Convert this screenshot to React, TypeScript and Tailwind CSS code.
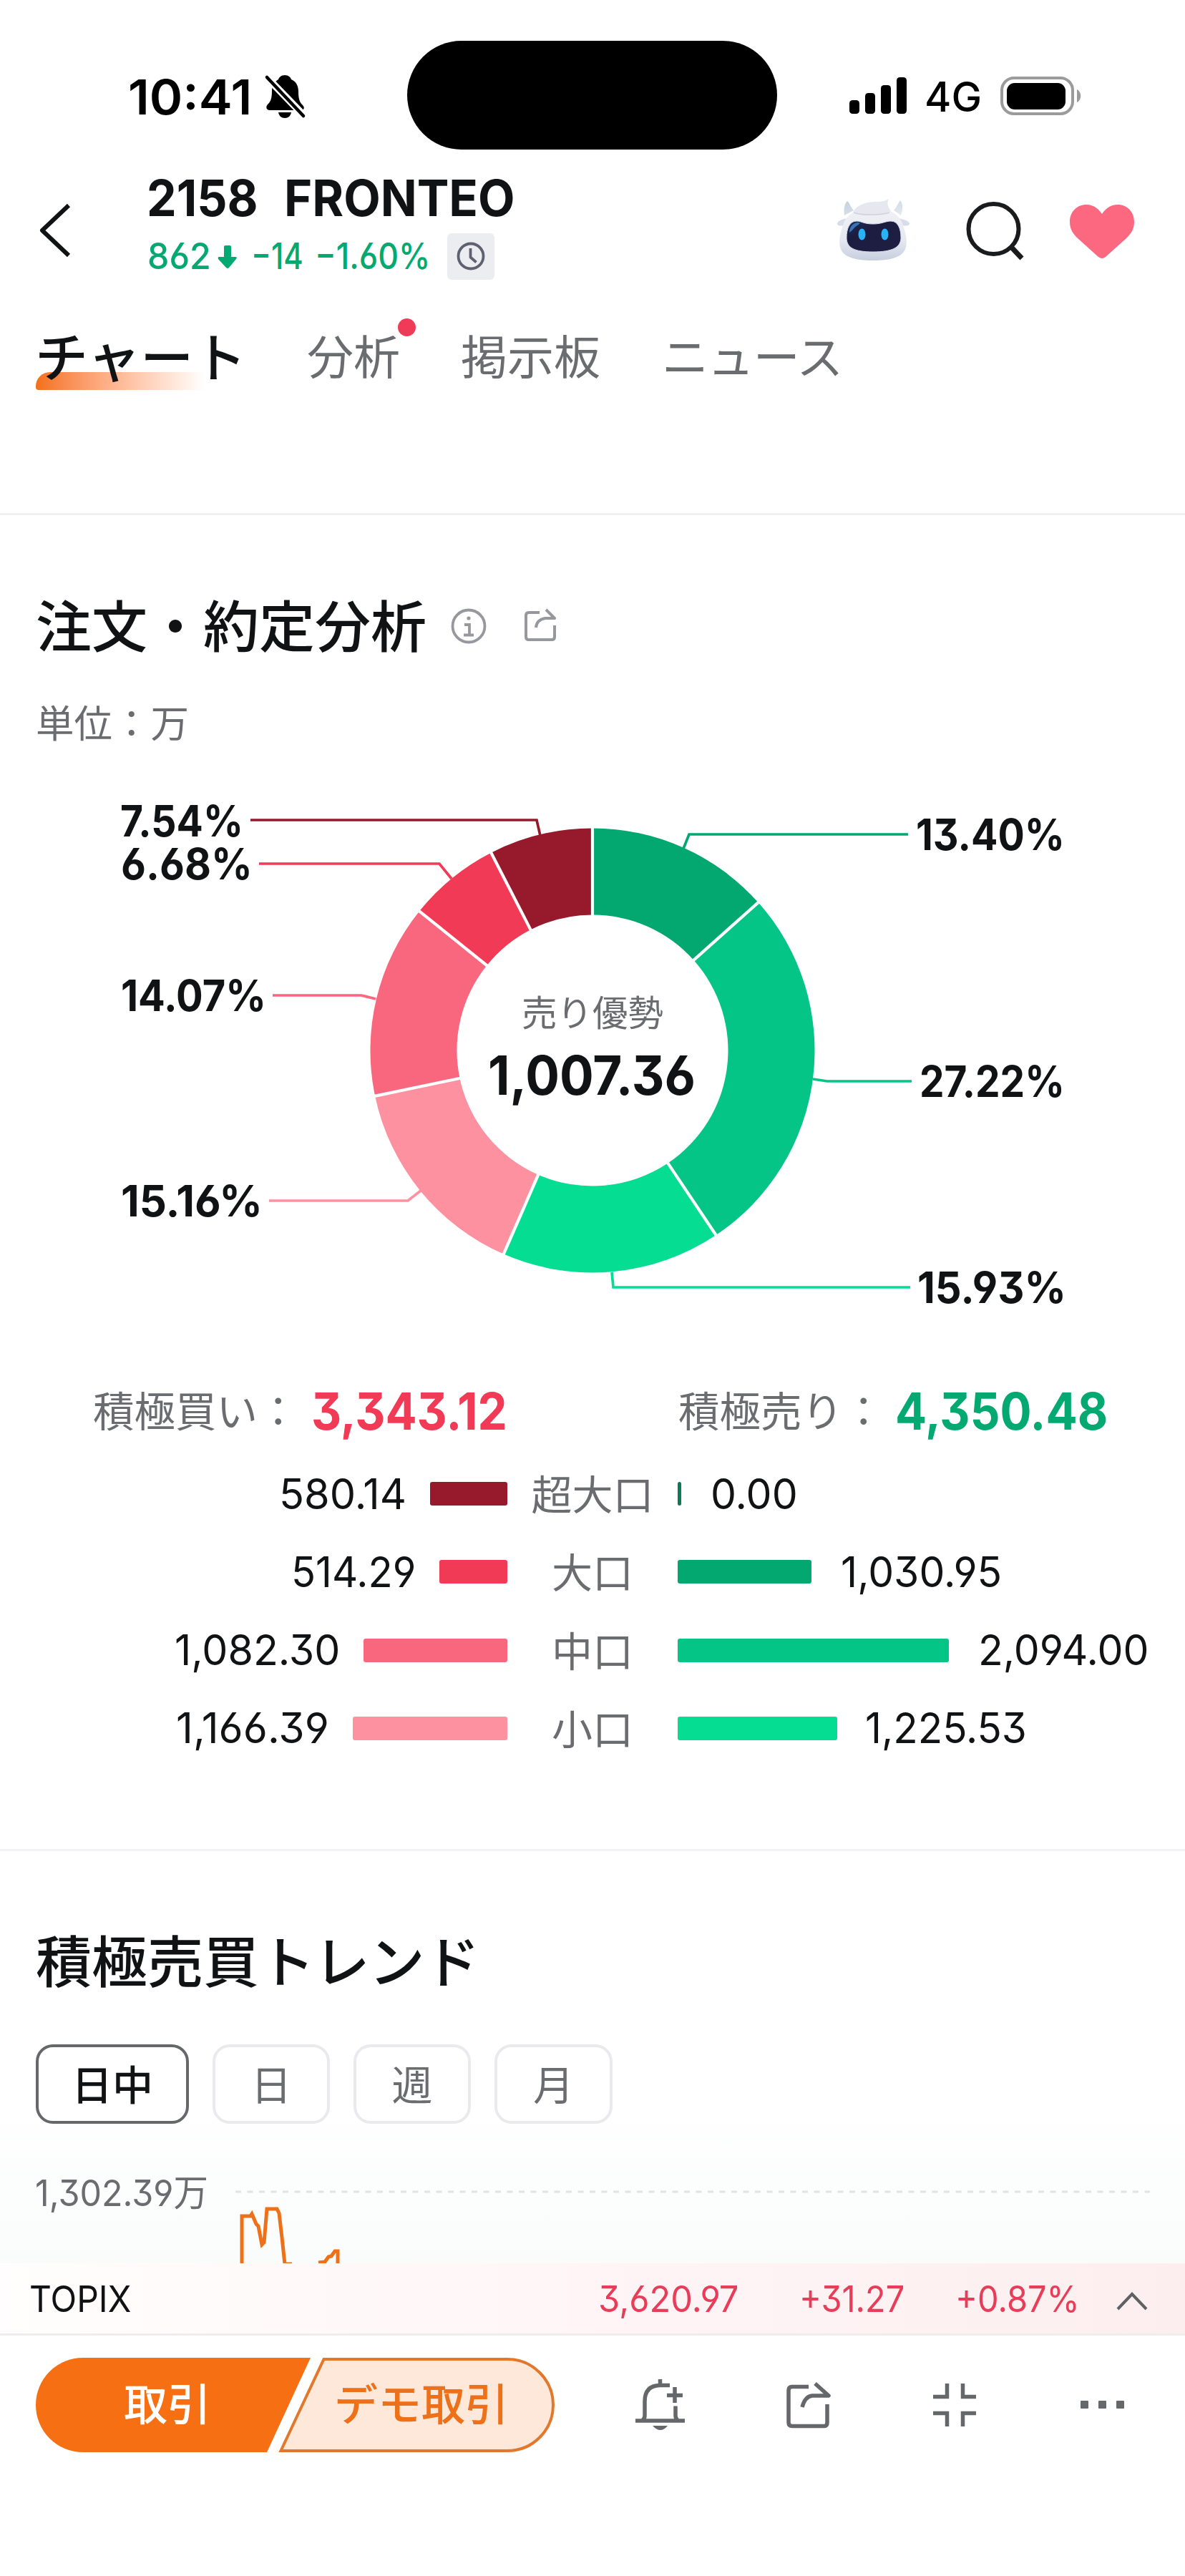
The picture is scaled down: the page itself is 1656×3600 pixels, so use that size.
import { useLayoutEffect, useRef, type ReactNode } from "react";

const NUM = "font-['Inter','Noto_Sans_CJK_JP',sans-serif] [font-feature-settings:'cv03','cv04','cv09']";
const JP = "font-['Noto_Sans_CJK_JP',sans-serif]";

/** Condenses a single line of text so that it fills the width of its box. */
function Fit({ className, children }: { className: string; children: ReactNode }) {
  const box = useRef<HTMLSpanElement>(null);
  const inner = useRef<HTMLSpanElement>(null);
  useLayoutEffect(() => {
    const apply = () => {
      if (!box.current || !inner.current) return;
      const k = box.current.clientWidth / inner.current.offsetWidth;
      inner.current.style.transform = `scaleX(${k})`;
    };
    apply();
    document.fonts?.ready.then(apply);
  }, []);
  return (
    <span ref={box} className={`block shrink-0 whitespace-pre ${NUM} ${className}`}>
      <span ref={inner} className="inline-block origin-left">
        {children}
      </span>
    </span>
  );
}

function BellOff() {
  return (
    <svg className="ml-[17px] mt-[2px] h-[64px] w-[60px] shrink-0" viewBox="0 0 60 64">
      <path d="M29 3c5 0 8 3 9 6 7 3 10 9 10 17 0 11 2 15 6 19 3 3 2 7-2 7H8c-5 0-6-5-3-8 4-4 6-8 6-19 0-8 4-13 9-16 1-3 4-6 9-6z" />
      <path d="M20 55h18c-1 5-4 8-9 8s-8-3-9-8z" />
      <path d="M0 2 60 64" stroke="#fff" strokeWidth="10" />
      <path d="M4 6 55 60" stroke="#000" strokeWidth="4.5" strokeLinecap="round" />
    </svg>
  );
}

function StatusBar() {
  return (
    <div className="flex h-[232px] items-center pt-[34px] text-black">
      <Fit className="ml-[179px] mt-[4px] w-[173px] text-[68px] leading-[80px] font-semibold">10:41</Fit>
      <BellOff />
      <div className="ml-[140px] h-[152px] w-[517px] shrink-0 rounded-[76px] bg-black" />
      <svg className="ml-[101px] h-[52px] w-[80px] shrink-0" viewBox="0 0 80 52">
        <rect x="0" y="33" width="14" height="19" rx="4.5" />
        <rect x="22" y="23" width="14" height="29" rx="4.5" />
        <rect x="44" y="12" width="14" height="40" rx="4.5" />
        <rect x="66" y="1" width="14" height="51" rx="4.5" />
      </svg>
      <Fit className="ml-[25px] mt-[6px] w-[80px] text-[57px] leading-[70px] font-medium">4G</Fit>
      <svg className="ml-[26px] mt-[2px] h-[54px] w-[114px] shrink-0" viewBox="0 0 114 54">
        <rect x="2" y="2" width="99" height="50" rx="17" fill="none" stroke="#9b9b9b" strokeWidth="4" />
        <rect x="9" y="9" width="82" height="37" rx="11" />
        <path d="M107 18c7 3 7 15 0 18z" fill="#9b9b9b" />
      </svg>
    </div>
  );
}

function Robot() {
  return (
    <svg className="h-[110px] w-[120px] shrink-0" viewBox="0 0 120 110">
      <defs>
        <linearGradient id="head" x1="0" y1="0" x2="0" y2="1">
          <stop offset="0" stopColor="#f0f1f6" />
          <stop offset="0.6" stopColor="#e6e9f1" />
          <stop offset="1" stopColor="#c6cede" />
        </linearGradient>
        <linearGradient id="horn" x1="0" y1="0" x2="1" y2="1">
          <stop offset="0" stopColor="#c3d1de" />
          <stop offset="1" stopColor="#e3eaf2" />
        </linearGradient>
        <linearGradient id="visor" x1="0" y1="0" x2="1" y2="1">
          <stop offset="0" stopColor="#1b3263" />
          <stop offset="0.3" stopColor="#1b1c40" />
          <stop offset="1" stopColor="#201f45" />
        </linearGradient>
      </defs>
      <path d="M20 36c-1-9 0-16 4-20 3 2 5 9 9 13zM99 36c3-9 3-17-1-21-3 4-5 10-9 14z" fill="url(#horn)" />
      <path d="M22 40c-5 2-10 3-12 7 0 4 4 4 9 3zM97 40c5 2 12 3 14 7 0 4-6 4-11 3z" fill="#d6dde8" />
      <path d="M60 26c26 0 39 10 43 27 3 9 5 19 3 27-3 14-20 19-46 19s-43-5-46-19c-2-8 0-18 3-27 4-17 17-27 43-27z" fill="url(#head)" />
      <path d="M32 31c7-11 20-14 32-14 7 0 13-1 18-4-3 5-2 10 3 17-8 6-43 9-53 1z" fill="#e6e7ef" />
      <path d="M33 32c8 4 40 4 50 0" fill="none" stroke="#d0d1dc" strokeWidth="1.5" />
      <path d="M37 44c7 0 10 4 23 4s17-4 25-4c10 0 14 11 14 23 0 14-12 20-39 20s-37-6-37-20c0-12 4-23 14-23z" fill="url(#visor)" stroke="#d7dbe7" strokeWidth="1" />
      <path d="M27 60c0-8 5-14 13-14 2 0 2 2-2 4-5 3-7 8-11 10z" fill="#3d72b5" />
      <ellipse cx="44.500" cy="62.500" rx="5" ry="8" fill="#2cb1f7" />
      <ellipse cx="76.500" cy="62.500" rx="5" ry="8" fill="#2cb1f7" />
    </svg>
  );
}

function Header() {
  return (
    <header className="flex h-[174px] items-start">
      <svg className="ml-[50px] mt-[50px] h-[80px] w-[52px] shrink-0" viewBox="0 0 52 80">
        <path d="M46 5 9 40l37 35" fill="none" stroke="#111214" strokeWidth="6" strokeLinejoin="round" />
      </svg>
      <div className="ml-[102px] mt-[5px] w-[600px]">
        <div className="flex h-[80px] items-center">
          <Fit className="ml-px w-[156px] text-[70px] leading-[80px] font-bold text-[#111214]">2158</Fit>
          <Fit className="ml-[36px] w-[323px] text-[70px] leading-[80px] font-bold text-[#111214]">FRONTEO</Fit>
        </div>
        <div className="flex h-[82px] items-center text-[51px] leading-[60px] font-medium text-[#04a971]">
          <Fit className="ml-[2px] w-[89px]">862</Fit>
          <svg className="ml-[8px] mt-[2px] h-[34px] w-[30px] shrink-0" viewBox="0 0 30 34">
            <path d="M10 3q0-2 2-2h6q2 0 2 2v14h6q3 0 1 3L17 32q-2 2-4 0L2 20q-1-3 1-3h7z" fill="#04a971" />
          </svg>
          <Fit className="ml-[18px] w-[73px]">−14</Fit>
          <Fit className="ml-[16px] w-[161px]">−1.60%</Fit>
          <div className="ml-[24px] flex h-[65px] w-[66px] items-center justify-center rounded-[6px] bg-[#ecedf0]">
            <svg className="h-[42px] w-[42px]" viewBox="0 0 42 42" fill="none" stroke="#5d6170" strokeWidth="3.800">
              <circle cx="21" cy="21" r="17.500" />
              <path d="M20.500 10v12.500l8 7" strokeLinejoin="round" />
            </svg>
          </div>
        </div>
      </div>
      <div className="ml-[356px] mt-[33px] flex items-start">
        <Robot />
        <svg className="ml-[68px] mt-[13px] h-[92px] w-[92px] shrink-0" viewBox="0 0 92 92" fill="none" stroke="#1a1b1d" strokeWidth="6">
          <circle cx="40.500" cy="42" r="35" />
          <path d="m64 66 16 17" strokeWidth="7" />
        </svg>
        <svg className="ml-[54px] mt-[20px] h-[78px] w-[92px] shrink-0" viewBox="0 0 92 78">
          <path d="M46 14C40 5 33 1 24 1 11 1 1 11 1 25c0 10 4 16 11 23l29 26q5 4 10 0l29-26c7-7 11-13 11-23C91 11 81 1 68 1c-9 0-16 4-22 13z" fill="#fb687f" />
        </svg>
      </div>
    </header>
  );
}

function Tabs() {
  return (
    <nav className={`flex h-[314px] items-start border-b-[3px] border-[#f0f0f2] pl-[50px] text-[65px] leading-[178px] text-[#6b6c70] ${JP}`}>
      <div className="relative w-[296px] text-[74px] font-medium text-[#111214]">
        <div className="absolute top-[114px] h-[25px] w-[236px] rounded-tl-[20px] rounded-bl-[4px] bg-linear-to-r from-[#f37012] to-white" />
        <span className="relative -left-px whitespace-nowrap">チャート</span>
      </div>
      <div className="relative ml-[83px]">
        分析
        <div className="absolute -right-[22px] top-[39px] size-[25px] rounded-full bg-[#ef3b57]" />
      </div>
      <div className="ml-[85px]">掲示板</div>
      <div className="ml-[86px] tracking-[-1.200px]">ニュース</div>
    </nav>
  );
}

type Slice = { pct: number; color: string; label: string; x: number; y: number; w: number; lead: string };

const slices: Slice[] = [
  { pct: 13.4, color: "#02a870", label: "13.40%", x: 1280, y: 1166.5, w: 208, lead: "1269,1166 963,1166 955,1186" },
  { pct: 27.22, color: "#04c586", label: "27.22%", x: 1285, y: 1511, w: 203, lead: "1274,1511 1156,1511 1136,1508" },
  { pct: 15.93, color: "#04dd92", label: "15.93%", x: 1282, y: 1799.5, w: 208, lead: "1272,1799 857,1799 855,1778" },
  { pct: 15.16, color: "#fd91a0", label: "15.16%", x: 169, y: 1678.5, w: 198, lead: "376,1678 570,1678 588,1664" },
  { pct: 14.07, color: "#f9677e", label: "14.07%", x: 169, y: 1391.5, w: 203, lead: "381,1391 505,1391 525,1396" },
  { pct: 6.68, color: "#f13a55", label: "6.68%", x: 169, y: 1207.5, w: 184, lead: "362,1207 614,1207 631,1228" },
  { pct: 7.54, color: "#971a2c", label: "7.54%", x: 168, y: 1147, w: 172, lead: "350,1146 750,1146 755,1168" },
];

const CX = 828;
const CY = 1468;
const polar = (r: number, t: number) => {
  const a = t * 2 * Math.PI - Math.PI / 2;
  return `${(CX + r * Math.cos(a)).toFixed(2)} ${(CY + r * Math.sin(a)).toFixed(2)}`;
};

function Donut() {
  const R = 310.5;
  const r = 189.5;
  let acc = 0;
  const arcs = slices.map((s) => {
    const a = acc;
    acc += s.pct / 100;
    return { ...s, a, b: acc };
  });
  return (
    <svg className={`block h-[894px] w-[1656px] ${NUM}`} viewBox="0 1038 1656 894">
      {arcs.map((s) => (
        <polyline key={s.label} points={s.lead} fill="none" stroke={s.color} strokeWidth="3.700" />
      ))}
      {arcs.map((s) => (
        <path
          key={s.label}
          d={`M${polar(R, s.a)}A${R} ${R} 0 0 1 ${polar(R, s.b)}L${polar(r, s.b)}A${r} ${r} 0 0 0 ${polar(r, s.a)}Z`}
          fill={s.color}
        />
      ))}
      {arcs.map((s) => (
        <path key={s.label} d={`M${polar(r - 2, s.a)}L${polar(R + 2, s.a)}`} stroke="#fff" strokeWidth="4.200" />
      ))}
      {arcs.map((s) => (
        <text key={s.label} x={s.x} y={s.y + 21.8} textLength={s.w} lengthAdjust="spacingAndGlyphs" className="fill-[#111214] text-[60px] font-bold">
          {s.label}
        </text>
      ))}
      <text x="729" y="1434" className={`fill-[#6b6c70] text-[49.500px] ${JP}`}>
        売り優勢
      </text>
      <text x="682" y="1530" textLength="290" lengthAdjust="spacingAndGlyphs" className="fill-[#111214] text-[75px] font-bold">
        1,007.36
      </text>
    </svg>
  );
}

const rows = [
  { label: "超大口", buy: "580.14", bw: "w-[178px]", bb: "w-[108px] bg-[#971a2c]", sell: "0.00", sw: "w-[122px]", sb: "w-[5px] bg-[#0d7a56]", sg: "ml-[41px]" },
  { label: "大口", buy: "514.29", bw: "w-[174px]", bb: "w-[95px] bg-[#f13a55]", sell: "1,030.95", sw: "w-[225px]", sb: "w-[187px] bg-[#02a870]", sg: "ml-[41px]" },
  { label: "中口", buy: "1,082.30", bw: "w-[231px]", bb: "w-[201px] bg-[#f9677e]", sell: "2,094.00", sw: "w-[239px]", sb: "w-[379px] bg-[#04c586]", sg: "ml-[41px]" },
  { label: "小口", buy: "1,166.39", bw: "w-[214px]", bb: "w-[216px] bg-[#fd91a0]", sell: "1,225.53", sw: "w-[226px]", sb: "w-[223px] bg-[#04dd92]", sg: "ml-[39px]" },
];

function OrderAnalysis() {
  return (
    <section className="h-[1867px] border-b-[3px] border-[#f2f2f4] pt-[106px]">
      <div className="flex h-[90px] items-center pl-[50px]">
        <h2 className={`text-[78px] leading-[90px] font-medium whitespace-nowrap text-[#111214] ${JP}`}>注文・約定分析</h2>
        <svg className="ml-[34px] mt-[7px] h-[50px] w-[50px] shrink-0" viewBox="0 0 50 50" fill="none" stroke="#97989d" strokeWidth="3.800">
          <circle cx="25" cy="25" r="22.500" />
          <path d="M19 23h7v15M18 37.500h14" />
          <circle cx="25" cy="14" r="2.600" fill="#97989d" stroke="none" />
        </svg>
        <svg className="ml-[50px] mt-[6px] h-[50px] w-[50px] shrink-0" viewBox="0 0 50 50" fill="none" stroke="#97989d" strokeWidth="4">
          <path d="M24 7H9q-4 0-4 4v30q0 4 4 4h32q4 0 4-4V25" />
          <path d="M33 3l12 12H32q-12 2-13 13" strokeLinejoin="round" />
        </svg>
      </div>
      <div className={`mt-[62px] pl-[50px] text-[53.500px] leading-[60px] text-[#6b6c70] ${JP}`}>単位：万</div>
      <Donut />
      <div className="flex h-[80px] items-center text-[57.500px] leading-[80px] text-[#6b6c70]">
        <span className={`ml-[130px] mt-[-6px] w-[305px] ${JP}`}>積極買い：</span>
        <Fit className="w-[274px] text-[72px] font-bold text-[#f13a55]">3,343.12</Fit>
        <span className={`ml-[239px] mt-[-6px] w-[303px] ${JP}`}>積極売り：</span>
        <Fit className="w-[297px] text-[72px] font-bold text-[#04a971]">4,350.48</Fit>
      </div>
      <div className="mt-[21px]">
        {rows.map((r) => (
          <div key={r.label} className="grid h-[109.250px] grid-cols-[709px_238px_709px] items-center text-[59px] leading-[80px] text-[#111214]">
            <div className="flex items-center justify-end">
              <Fit className={r.bw}>{r.buy}</Fit>
              <div className={`ml-[33px] h-[33px] shrink-0 rounded-[3px] ${r.bb}`} />
            </div>
            <div className={`mt-[-5px] text-center text-[57px] text-[#6b6c70] ${JP}`}>{r.label}</div>
            <div className="flex items-center">
              <div className={`h-[33px] shrink-0 rounded-[3px] ${r.sb}`} />
              <Fit className={`${r.sg} ${r.sw}`}>{r.sell}</Fit>
            </div>
          </div>
        ))}
      </div>
    </section>
  );
}

const periods = [
  { label: "日中", cls: "w-[214px] border-[#66676b] font-medium text-[#111214]" },
  { label: "日", cls: "w-[164px] border-[#e9e9ee] text-[#6b6c70]" },
  { label: "週", cls: "w-[164px] border-[#e9e9ee] text-[#6b6c70]" },
  { label: "月", cls: "w-[165px] border-[#e9e9ee] text-[#6b6c70]" },
];

function Trend() {
  return (
    <section className="h-[576px] bg-linear-to-b from-white from-60% to-[#fafbfb] pt-[105px]">
      <h2 className={`pl-[50px] text-[78px] leading-[90px] font-medium whitespace-nowrap text-[#111214] ${JP}`}>
        積極売買<span className="tracking-[-1.200px]">トレンド</span>
      </h2>
      <div className="mt-[75px] flex gap-[33px] pl-[50px]">
        {periods.map((p) => (
          <button key={p.label} className={`h-[111px] rounded-[24px] border-4 bg-white pb-[5px] text-[57px] leading-[98px] ${JP} ${p.cls}`}>
            {p.label}
          </button>
        ))}
      </div>
      <svg className={`block h-[195px] w-[1656px] ${NUM}`} viewBox="0 2968 1656 195">
        <text x="49" y="3083" textLength="242" lengthAdjust="spacingAndGlyphs" className="fill-[#6b6c70] text-[51px]">
          1,302.39万
        </text>
        <path d="M329 3063H1607" stroke="#e2e2e5" strokeWidth="3" strokeDasharray="8 8.500" />
        <path
          d="M338 3166V3097h12l2-3 6 14 3 3 5 26 3-3 4-47h14l3 6 4 34 4 37h10M445 3162l9-1 5-7 4-1 5-7h4v18"
          fill="none"
          stroke="#ee7018"
          strokeWidth="5"
        />
      </svg>
    </section>
  );
}

function IndexTicker() {
  return (
    <div className="flex h-[101px] items-center border-b-[3px] border-[#efecee] bg-linear-to-r from-[#fffdfd] via-[#fff5f6] to-[#fceeef] pt-px text-[51px] leading-[70px] text-[#e83d58]">
      <Fit className="ml-[41px] w-[142px] text-[#111214]">TOPIX</Fit>
      <Fit className="ml-[653px] w-[196px]">3,620.97</Fit>
      <Fit className="ml-[85px] w-[147px]">+31.27</Fit>
      <Fit className="ml-[71px] w-[174px]">+0.87%</Fit>
      <svg className="ml-[49px] mt-[4px] h-[32px] w-[48px] shrink-0" viewBox="0 0 48 32">
        <path d="m4 28 20-21 20 21" fill="none" stroke="#5f6064" strokeWidth="4" />
      </svg>
    </div>
  );
}

function BottomBar() {
  return (
    <footer className="flex items-start pt-[31px]">
      <div className="relative ml-[50px] flex h-[132px] w-[725px] shrink-0">
        <svg className="absolute inset-0 h-[132px] w-[725px]" viewBox="0 0 725 132">
          <path d="M66 0H384L323 132H66A66 66 0 0 1 66 0Z" fill="#f66f12" />
          <path d="M402.500 2H659A64 64 0 0 1 659 130H342.500Z" fill="#fde8da" stroke="#e2782c" strokeWidth="4" />
        </svg>
        <span className={`relative w-[368px] text-center text-[61px] leading-[124px] font-medium text-white ${JP}`}>取引</span>
        <span className={`relative w-[342px] text-center text-[61px] leading-[124px] font-medium text-[#ee7018] ${JP}`}>デモ取引</span>
      </div>
      <svg className="ml-[95px] h-[132px] w-[310px] shrink-0" viewBox="0 -5 310 132" fill="none" stroke="#66676b" strokeWidth="5.500">
        <g transform="translate(0 10)">
          <path d="M18 73h69M52.500 15v8M66 23.500H52Q31 24 31 46V66q0 4-3 6M74 52.500V66q0 4 3 6M62 37.500H84M73 26v22" />
          <path d="M42 80h21q-10 12-21 0z" fill="#66676b" stroke="none" />
          <path d="M260 25.500H237q-5 0-5 5v45q0 5 5 5h45q4 0 4-5V50" />
          <path d="M269 21l19 17H265q-10 1-14 16" strokeLinejoin="round" />
        </g>
      </svg>
      <svg className="ml-[121px] mt-[33px] h-[66px] w-[66px] shrink-0" viewBox="0 0 66 66" fill="none" stroke="#66676b" strokeWidth="5.500">
        <path d="M3 21.500h19.500V3M63 21.500H44.500V3M3 44.500h19.500V63M63 44.500H44.500V63" />
      </svg>
      <svg className="ml-[142px] mt-[60px] h-[12px] w-[64px] shrink-0" viewBox="0 0 64 12" fill="#66676b">
        <rect x="1" y="0" width="11" height="11" rx="1" />
        <rect x="26" y="0" width="11" height="11" rx="1" />
        <rect x="51" y="0" width="11" height="11" rx="1" />
      </svg>
    </footer>
  );
}

export default function App() {
  return (
    <div className="h-[3600px] w-[1656px] overflow-hidden bg-white">
      <StatusBar />
      <Header />
      <Tabs />
      <OrderAnalysis />
      <Trend />
      <IndexTicker />
      <BottomBar />
    </div>
  );
}
